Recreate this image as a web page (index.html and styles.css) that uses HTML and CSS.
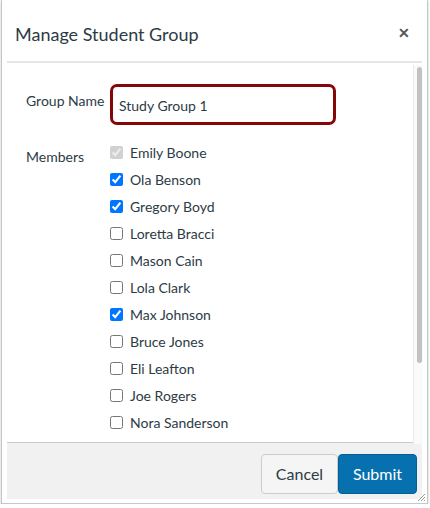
FILE: index.html
```html
<!DOCTYPE html>
<html>
<head>
<meta charset="utf-8">
<link rel="stylesheet" href="styles.css">
</head>
<body>
<div class="dialog">
  <div class="inner">
    <div class="header">
      <h1 class="title">Manage Student Group</h1>
      <span class="close">&#x2715;</span>
    </div>
    <div class="content">
      <div class="row">
        <div class="label name-label">Group Name</div>
        <div class="input">Study Group 1</div>
      </div>
      <div class="row members-row">
        <div class="label members-label">Members</div>
        <ul class="members">
          <li><input type="checkbox" checked disabled><span>Emily Boone</span></li>
          <li><input type="checkbox" checked><span>Ola Benson</span></li>
          <li><input type="checkbox" checked><span>Gregory Boyd</span></li>
          <li><input type="checkbox"><span>Loretta Bracci</span></li>
          <li><input type="checkbox"><span>Mason Cain</span></li>
          <li><input type="checkbox"><span>Lola Clark</span></li>
          <li><input type="checkbox" checked><span>Max Johnson</span></li>
          <li><input type="checkbox"><span>Bruce Jones</span></li>
          <li><input type="checkbox"><span>Eli Leafton</span></li>
          <li><input type="checkbox"><span>Joe Rogers</span></li>
          <li><input type="checkbox"><span>Nora Sanderson</span></li>
          <li><input type="checkbox"></li>
        </ul>
      </div>
    </div>
    <div class="footer">
      <button class="btn cancel">Cancel</button>
      <button class="btn submit">Submit</button>
    </div>
  </div>
  <div class="scrollbar"><div class="thumb"></div></div>
  <svg class="grip" width="10" height="10" viewBox="0 0 10 10"><path d="M9 2 L2 9 M9 5 L5 9 M9 8 L8 9" stroke="#9a9a9a" stroke-width="1"/></svg>
</div>
</body>
</html>
```

FILE: styles.css
```css
* { box-sizing: border-box; }
html, body { margin: 0; padding: 0; background: #ffffff; }
body { font-family: Lato, "Liberation Sans", sans-serif; color: #2d3b45; }

.dialog {
  position: relative;
  width: 427px;
  height: 504px;
  margin-left: 1px;
  border: 1px solid #c6c6c6;
  border-top: none;
  background: #fff;
  box-shadow: 0 1px 2px rgba(0,0,0,0.25);
}
.inner {
  padding: 0 5px;
  display: flex;
  flex-direction: column;
  height: 100%;
}
.header {
  height: 63px;
  display: flex;
  align-items: center;
  justify-content: space-between;
  padding: 0 12px 0 8px;
  border-bottom: 2px solid #e4e6e8;
}
.title {
  margin: 0;
  margin-top: 7px;
  font-size: 18px;
  font-weight: 400;
  color: #2d3b45;
}
.close {
  font-size: 14px;
  font-weight: 700;
  color: #555;
  margin-top: 3px;
}
.content {
  height: 379px;
  overflow: hidden;
  padding: 21px 0 0 19px;
}
.scrollbar {
  position: absolute;
  left: 411px;
  top: 65px;
  width: 10px;
  height: 379px;
  background: #fafafa;
  border-left: 1px solid #ececec;
  padding: 2px 1px 0 3px;
}
.thumb {
  height: 296px;
  background: #c2c2c2;
  border-radius: 3px;
}

.row { display: flex; }
.label {
  width: 84px;
  font-size: 14px;
  color: #2d3b45;
}
.name-label { padding-top: 8px; }
.input {
  width: 226px;
  height: 41px;
  border: 3px solid #850606;
  border-radius: 7px;
  padding: 10px 0 0 6px;
  font-size: 14px;
  color: #2d3b45;
}
.members-row { margin-top: 14px; }
.members-label { padding-top: 9px; }
.members {
  list-style: none;
  margin: 0;
  padding: 0;
}
.members li {
  height: 27px;
  display: flex;
  align-items: center;
  font-size: 14px;
  color: #2d3b45;
}
.members input {
  width: 13px;
  height: 13px;
  margin: 0 7px 0 0;
}
.footer {
  height: 57px;
  flex: none;
  background: #f1f1f1;
  border-top: 1px solid #c7cdd1;
  display: flex;
  justify-content: flex-end;
  align-items: center;
  padding-right: 5px;
  padding-top: 5px;
}
.btn {
  font-family: Lato, "Liberation Sans", sans-serif;
  font-size: 16px;
  height: 40px;
  border-radius: 4px;
  padding: 0 13px;
  cursor: pointer;
}
.cancel {
  background: #f5f5f5;
  border: 1px solid #c7cdd1;
  color: #2d3b45;
  width: 77px;
}
.submit {
  background: #0770ae;
  border: 1px solid #065f94;
  color: #fff;
  width: 79px;
}
.grip {
  position: absolute;
  right: 1px;
  bottom: 1px;
}
```
